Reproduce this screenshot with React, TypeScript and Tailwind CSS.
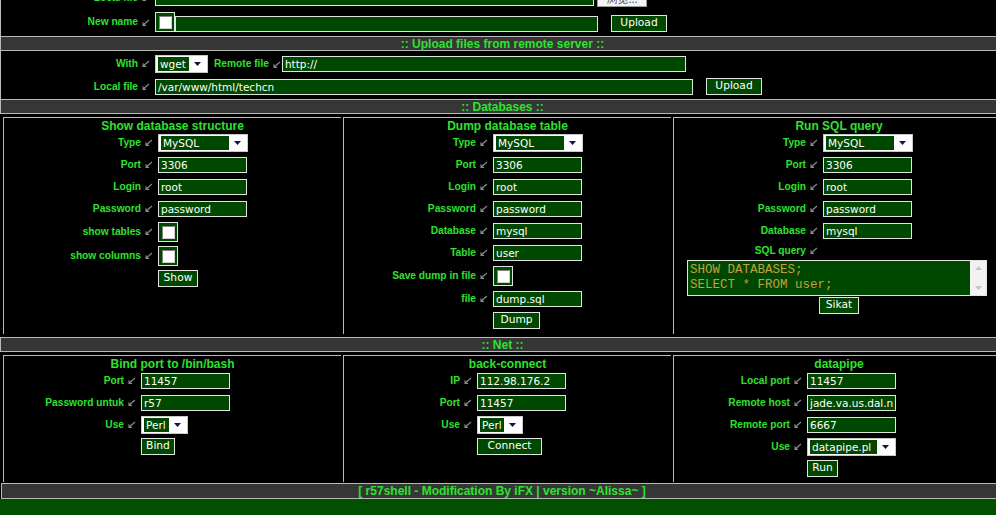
import React from "react";

const LABEL = "font-['Liberation_Sans',Arial,sans-serif] text-[10.2px] font-bold text-[#2ee22e] whitespace-nowrap leading-none";
const TITLE = "font-['Liberation_Sans',Arial,sans-serif] text-[12px] font-bold text-[#2ee22e] whitespace-nowrap leading-none";
const FIELD = "font-['DejaVu_Sans',Verdana,sans-serif] text-[10.5px] text-white";
const LINE = "border-[#b4bcb4]";

function Arrow({ className = "" }: { className?: string }) {
  return (
    <svg width="8" height="7" viewBox="0 0 8 7" className={`shrink-0 ${className}`}>
      <path d="M7 1L1.2 6M1 3.2V6.4H4" stroke="#8c8c8c" strokeWidth="1.1" fill="none" />
    </svg>
  );
}

function Label({ text, w, className = "" }: { text: string; w: string; className?: string }) {
  return (
    <div className={`${w} flex shrink-0 items-center justify-end pr-[5px] ${className}`}>
      <span className={LABEL}>{text}</span>
      <Arrow className="ml-[4px]" />
    </div>
  );
}

function Input({ value, w, className = "" }: { value: string; w: string; className?: string }) {
  return (
    <input
      readOnly
      value={value}
      className={`${w} h-[16px] shrink-0 border border-[#dfe6df] bg-[#004800] px-[2px] leading-none outline-none ${FIELD} ${className}`}
    />
  );
}

function Select({ value, w }: { value: string; w: string }) {
  return (
    <div className={`${w} flex h-[18px] shrink-0 border border-[#c8c8c8] bg-white p-[1px] pl-[2px]`}>
      <div className={`flex flex-1 items-center overflow-hidden whitespace-nowrap bg-[#004800] pl-[2px] leading-none ${FIELD} text-[#62b8ae]`}>
        {value}
      </div>
      <div className="flex w-[17px] items-center justify-center">
        <svg width="7" height="4" viewBox="0 0 7 4">
          <path d="M0 0H7L3.5 4Z" fill="#141448" />
        </svg>
      </div>
    </div>
  );
}

function Check() {
  return (
    <div className="flex h-[20px] w-[20px] shrink-0 items-center justify-center border border-[#dfe6df] bg-[#004800]">
      <div className="h-[13px] w-[13px] border border-t-[#808080] border-l-[#808080] border-b-[#d4d0c8] border-r-[#d4d0c8] bg-white" />
    </div>
  );
}

function Btn({ w, children, className = "" }: { w: string; children: React.ReactNode; className?: string }) {
  return (
    <button className={`${w} h-[17px] shrink-0 border border-[#dfe6df] bg-[#004800] leading-none ${FIELD} text-[10.67px] ${className}`}>
      {children}
    </button>
  );
}

function Row({ label, lw, h = "h-[22px]", children }: { label: string; lw: string; h?: string; children?: React.ReactNode }) {
  return (
    <div className={`flex items-center ${h}`}>
      <Label text={label} w={lw} />
      {children}
    </div>
  );
}

function BtnRow({ lw, children }: { lw: string; children: React.ReactNode }) {
  return (
    <div className="flex h-[22px] items-start pt-[2px]">
      <div className={`${lw} shrink-0`} />
      {children}
    </div>
  );
}

function Header({ children }: { children: React.ReactNode }) {
  return (
    <div className={`flex h-[15px] items-center justify-center border-y border-l ${LINE} bg-[#363636]`}>
      <span className={TITLE}>{children}</span>
    </div>
  );
}

function Cell({ w, title, children }: { w: string; title: string; children: React.ReactNode }) {
  return (
    <div className={`${w} shrink-0 border-l border-t ${LINE} pb-[2px]`}>
      <div className="flex h-[14px] items-center justify-center pt-[2px]">
        <span className={TITLE}>{title}</span>
      </div>
      {children}
    </div>
  );
}

export default function App() {
  return (
    <div className="h-[515px] w-[996px] overflow-hidden bg-[#005000]">
      <div className="-mt-[13px] w-[1004px] bg-black">
        {/* upload from local */}
        <div className={`border-x ${LINE} pt-[3px] pb-[4px]`}>
          <div className="flex h-[16px] items-center">
            <Label text="Local file" w="w-[154px]" />
            <Input value="" w="w-[439px]" />
            <div className="ml-[3px] flex h-[18px] w-[50px] shrink-0 items-center justify-center border border-[#9a9a9a] bg-[#f4f4f4] font-['Noto_Sans_CJK_SC',sans-serif] text-[11px] text-[#555]">
              浏览...
            </div>
          </div>
          <div className="mt-[6px] flex h-[20px] items-start">
            <Label text="New name" w="w-[154px]" className="h-[20px]" />
            <Check />
            <Input value="" w="w-[423px]" className="mt-[4px]" />
            <Btn w="w-[56px]" className="ml-[13px] mt-[3px]">
              Upload
            </Btn>
          </div>
        </div>

        <Header>:: Upload files from remote server ::</Header>
        <div className={`border-x ${LINE} pt-[4px] pb-[2px]`}>
          <div className="flex h-[18px] items-center">
            <Label text="With" w="w-[154px]" />
            <Select value="wget" w="w-[53px]" />
            <span className={`${LABEL} ml-[6px]`}>Remote file</span>
            <Arrow className="ml-[4px] mr-[1px]" />
            <Input value="http://" w="w-[404px]" />
          </div>
          <div className="mt-[4px] flex h-[20px] items-center">
            <Label text="Local file" w="w-[154px]" />
            <Input value="/var/www/html/techcn" w="w-[538px]" />
            <Btn w="w-[56px]" className="ml-[13px] mb-[2px]">
              Upload
            </Btn>
          </div>
        </div>

        <Header>:: Databases ::</Header>
        <div className="flex gap-[2px] pl-[3px] pt-[3px] pb-[3px]">
          <Cell w="w-[338px]" title="Show database structure">
            <Row label="Type" lw="w-[154px]">
              <Select value="MySQL" w="w-[90px]" />
            </Row>
            <Row label="Port" lw="w-[154px]">
              <Input value="3306" w="w-[89px]" />
            </Row>
            <Row label="Login" lw="w-[154px]">
              <Input value="root" w="w-[89px]" />
            </Row>
            <Row label="Password" lw="w-[154px]">
              <Input value="password" w="w-[89px]" />
            </Row>
            <Row label="show tables" lw="w-[154px]" h="h-[24px]">
              <Check />
            </Row>
            <Row label="show columns" lw="w-[154px]" h="h-[24px]">
              <Check />
            </Row>
            <BtnRow lw="w-[154px]">
              <Btn w="w-[40px]">Show</Btn>
            </BtnRow>
          </Cell>

          <Cell w="w-[328px]" title="Dump database table">
            <Row label="Type" lw="w-[149px]">
              <Select value="MySQL" w="w-[90px]" />
            </Row>
            <Row label="Port" lw="w-[149px]">
              <Input value="3306" w="w-[89px]" />
            </Row>
            <Row label="Login" lw="w-[149px]">
              <Input value="root" w="w-[89px]" />
            </Row>
            <Row label="Password" lw="w-[149px]">
              <Input value="password" w="w-[89px]" />
            </Row>
            <Row label="Database" lw="w-[149px]">
              <Input value="mysql" w="w-[89px]" />
            </Row>
            <Row label="Table" lw="w-[149px]">
              <Input value="user" w="w-[89px]" />
            </Row>
            <Row label="Save dump in file" lw="w-[149px]" h="h-[24px]">
              <Check />
            </Row>
            <Row label="file" lw="w-[149px]">
              <Input value="dump.sql" w="w-[89px]" />
            </Row>
            <BtnRow lw="w-[149px]">
              <Btn w="w-[47px]">Dump</Btn>
            </BtnRow>
          </Cell>

          <Cell w="w-[331px]" title="Run SQL query">
            <Row label="Type" lw="w-[149px]">
              <Select value="MySQL" w="w-[90px]" />
            </Row>
            <Row label="Port" lw="w-[149px]">
              <Input value="3306" w="w-[89px]" />
            </Row>
            <Row label="Login" lw="w-[149px]">
              <Input value="root" w="w-[89px]" />
            </Row>
            <Row label="Password" lw="w-[149px]">
              <Input value="password" w="w-[89px]" />
            </Row>
            <Row label="Database" lw="w-[149px]">
              <Input value="mysql" w="w-[89px]" />
            </Row>
            <Row label="SQL query" lw="w-[149px]" h="h-[18px]" />
            <div className="ml-[13px] flex h-[36px] w-[300px] border border-[#dfe6df] bg-[#004800]">
              <div className="flex-1 whitespace-pre pl-[2px] pt-[2px] font-['Liberation_Mono','Courier_New',monospace] text-[12.5px] leading-[15px] text-[#c0a040]">
                {"SHOW DATABASES;\nSELECT * FROM user;"}
              </div>
              <div className="flex w-[16px] flex-col items-center justify-between bg-[#f2f2f2] py-[5px]">
                <svg width="7" height="4" viewBox="0 0 7 4">
                  <path d="M0 4H7L3.5 0Z" fill="#c4c4c4" />
                </svg>
                <svg width="7" height="4" viewBox="0 0 7 4">
                  <path d="M0 0H7L3.5 4Z" fill="#c4c4c4" />
                </svg>
              </div>
            </div>
            <div className="flex h-[19px] items-start justify-center pt-[1px]">
              <Btn w="w-[40px]">Sikat</Btn>
            </div>
          </Cell>
        </div>

        <Header>:: Net ::</Header>
        <div className="flex gap-[2px] pl-[3px] pt-[3px] pb-[1px]">
          <Cell w="w-[338px]" title="Bind port to /bin/bash">
            <Row label="Port" lw="w-[137px]">
              <Input value="11457" w="w-[89px]" />
            </Row>
            <Row label="Password untuk" lw="w-[137px]">
              <Input value="r57" w="w-[89px]" />
            </Row>
            <Row label="Use" lw="w-[137px]">
              <Select value="Perl" w="w-[47px]" />
            </Row>
            <BtnRow lw="w-[137px]">
              <Btn w="w-[34px]">Bind</Btn>
            </BtnRow>
          </Cell>

          <Cell w="w-[328px]" title="back-connect">
            <Row label="IP" lw="w-[133px]">
              <Input value="112.98.176.2" w="w-[89px]" />
            </Row>
            <Row label="Port" lw="w-[133px]">
              <Input value="11457" w="w-[89px]" />
            </Row>
            <Row label="Use" lw="w-[133px]">
              <Select value="Perl" w="w-[46px]" />
            </Row>
            <BtnRow lw="w-[133px]">
              <Btn w="w-[65px]">Connect</Btn>
            </BtnRow>
          </Cell>

          <Cell w="w-[331px]" title="datapipe">
            <Row label="Local port" lw="w-[133px]">
              <Input value="11457" w="w-[89px]" />
            </Row>
            <Row label="Remote host" lw="w-[133px]">
              <Input value="jade.va.us.dal.net" w="w-[89px]" />
            </Row>
            <Row label="Remote port" lw="w-[133px]">
              <Input value="6667" w="w-[89px]" />
            </Row>
            <Row label="Use" lw="w-[133px]">
              <Select value="datapipe.pl" w="w-[89px]" />
            </Row>
            <BtnRow lw="w-[133px]">
              <Btn w="w-[31px]">Run</Btn>
            </BtnRow>
          </Cell>
        </div>

        <div className="px-[1px]">
          <div className={`flex h-[16px] items-center justify-center border ${LINE} bg-[#363636]`}>
            <span className={TITLE}>[ r57shell - Modification By iFX | version ~Alissa~ ]</span>
          </div>
        </div>
      </div>
    </div>
  );
}
